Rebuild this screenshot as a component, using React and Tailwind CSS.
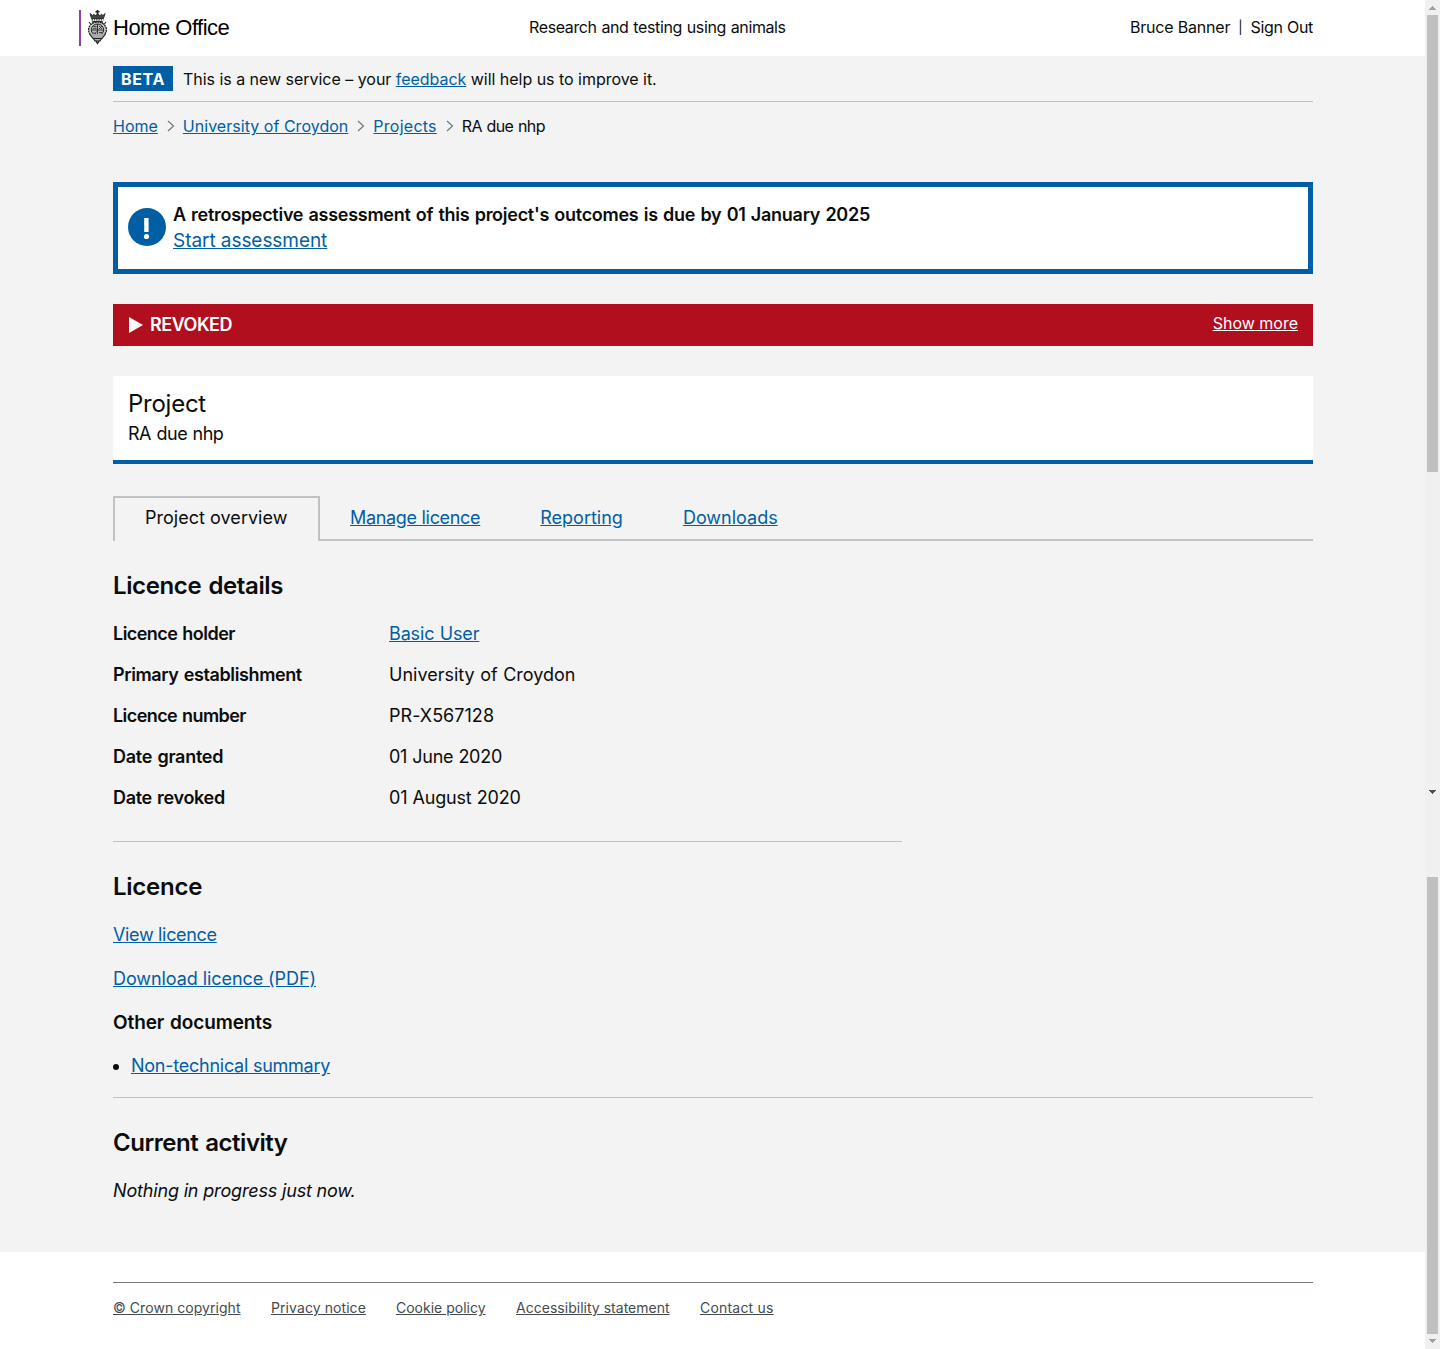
import React from "react";

const link = "text-[#005ea5] underline";

function Crest() {
  return (
    <svg width="20" height="36" viewBox="0 0 20 36" fill="none" stroke="#222" className="shrink-0">
      <path d="M9.500 0v5M7.500 1.800h4" strokeWidth="1.600" />
      <path d="M2 3.500l1.500 5h12L17 3.500l-2 2-1.500-1.300-1.500 1.600-2-1.800-3 1.800L6 4.200 4.500 5.500z" fill="#444" strokeWidth=".9" />
      <path d="M3.500 9.800h12" strokeWidth="1.200" strokeDasharray="1.500 .8" />
      <path d="M4.500 11.500h10v3h-10z" fill="#aaa" strokeWidth=".9" />
      <path d="M1 12l2.500 3M18 12l-2.500 3M7 11.500v3M9.500 11v3M12 11.500v3" strokeWidth="1.100" />
      <ellipse cx="9.500" cy="19.800" rx="8.900" ry="7.800" fill="#ccc" strokeWidth="1.300" strokeDasharray="2 .6" />
      <ellipse cx="9.500" cy="19.800" rx="6.200" ry="5.800" fill="#bbb" strokeWidth="1" />
      <path d="M9.500 14v12M3.500 20h12" strokeWidth=".9" />
      <path d="M5.500 16.500h3M5 18.300h3.500M11 16l3 3M14 16l-3 3M5.500 22.500l3 2M8.500 21.500l-2 3M11 22.500h3M11 24.300h2" strokeWidth=".8" />
      <path d="M1.500 24l3.500 4.500h9l3.500-4.500M5 28l2 3h5l2-3M7.500 30.500l2 3.200 2-3.200" fill="#aaa" strokeWidth="1.200" />
    </svg>
  );
}

function Arrow({ up, color }) {
  return (
    <svg width="7" height="4" viewBox="0 0 7 4" fill={color} shapeRendering="crispEdges">
      {up ? <path d="M3 0h1v1h1v1h1v1h1v1H0V3h1V2h1V1h1z" /> : <path d="M0 0h7v1H6v1H5v1H4v1H3V3H2V2H1V1H0z" />}
    </svg>
  );
}

function Scrollbar() {
  return (
    <div className="flex w-[15px] shrink-0 flex-col items-center bg-[#f0f0f0]">
      <div className="flex h-[15px] items-center pt-px"><Arrow up color="#a0a0a0" /></div>
      <div className="h-[457px] w-[11px] bg-[#c0c0c0]" />
      <div className="mt-[318px] h-1"><Arrow color="#505050" /></div>
      <div className="mt-[83px] h-[457px] w-[11px] bg-[#c0c0c0]" />
      <div className="flex h-[15px] items-start pt-[5px]"><Arrow color="#a0a0a0" /></div>
    </div>
  );
}

function Chevron() {
  return (
    <svg width="8" height="12" viewBox="0 0 8 12" fill="none" stroke="#6f777b" strokeWidth="1.200" className="ml-[9px] mr-2 shrink-0">
      <path d="M1 1l5.500 5L1 11" />
    </svg>
  );
}

const details = [
  ["Licence holder", "Basic User", "tracking-[-0.54px]", "tracking-[-0.13px]"],
  ["Primary establishment", "University of Croydon", "tracking-[-0.38px]", "tracking-[0.01px]"],
  ["Licence number", "PR-X567128", "tracking-[-0.58px]", "tracking-[0.03px]"],
  ["Date granted", "01 June 2020", "tracking-[-0.26px]", "tracking-[-0.28px]"],
  ["Date revoked", "01 August 2020", "tracking-[-0.32px]", "tracking-[-0.2px]"],
];

const footer = [
  ["© Crown copyright", "w-[128px] tracking-[0.05px]"],
  ["Privacy notice", "w-[95px] tracking-[0.08px]"],
  ["Cookie policy", "w-[90px]"],
  ["Accessibility statement", "w-[154px] tracking-[0.02px]"],
  ["Contact us", "w-[74px] tracking-[0.2px]"],
];

export default function App() {
  return (
    <div className="flex h-[1349px] w-[1440px] overflow-hidden bg-white font-['Inter',sans-serif] text-[#0b0c0c]">
      <div className="w-[1425px] shrink-0">
        <header className="flex h-14 items-start pl-[79px] pr-28 text-base leading-[20px]">
          <div className="mt-[10px] flex h-9 w-[450px] border-l-2 border-[#8f3fa8] pl-[7px]">
            <Crest />
            <span className="ml-[5px] mt-[3px] whitespace-nowrap font-['Liberation_Sans',sans-serif] text-[22px] leading-[30px] tracking-[-0.5px] text-black">Home Office</span>
          </div>
          <span className="mt-[17px] tracking-[-0.38px] [word-spacing:0.7px]">Research and testing using animals</span>
          <div className="ml-auto mt-[17px] flex">
            <span className="tracking-[-0.2px]">Bruce Banner</span>
            <span className="mx-2 text-[13px]">|</span>
            <span className="tracking-[-0.3px]">Sign Out</span>
          </div>
        </header>

        <main className="h-[1196px] bg-[#f3f3f3] px-[113px] pr-28">
          <div className="flex h-[46px] items-start border-b border-[#bfc1c3] pt-[10px]">
            <strong className="h-[25px] w-[60px] bg-[#005ea5] text-center text-base font-bold leading-[26px] tracking-[0.6px] text-white">BETA</strong>
            <span className="ml-[10px] text-base leading-[26px] tracking-[-0.03px]">This is a new service – your <a className={link}>feedback</a> will help us to improve it.</span>
          </div>

          <nav className="mt-[14px] flex h-5 items-center text-base leading-5">
            <a className={link}>Home</a><Chevron />
            <a className={"tracking-[0.03px] " + link}>University of Croydon</a><Chevron />
            <a className={"tracking-[0.25px] " + link}>Projects</a><Chevron />
            <span className="tracking-[-0.6px] [word-spacing:0.7px]">RA due nhp</span>
          </nav>

          <section className="mt-[46px] flex h-[92px] border-[5px] border-[#005ea5] bg-white pl-[10px] pt-[15px]">
            <svg width="38" height="38" viewBox="0 0 38 38" className="mt-[6px] shrink-0">
              <circle cx="19" cy="19" r="19" fill="#005ea5" />
              <path d="M16.200 10h4.400v14h-4.400z" fill="#fff" />
              <circle cx="18.500" cy="28.500" r="2.600" fill="#fff" />
            </svg>
            <div className="ml-[7px]">
              <p className="text-[18px] font-semibold leading-[26px] tracking-[-0.27px] [word-spacing:1px]">A retrospective assessment of this project's outcomes is due by 01 January 2025</p>
              <a className="block w-max text-[19px] leading-[26px] tracking-[-0.06px] text-[#005ea5] underline">Start assessment</a>
            </div>
          </section>

          <section className="mt-[30px] flex h-[42px] items-center bg-[#b10e1e] px-[15px] text-white">
            <svg width="16" height="16" viewBox="0 0 16 16" fill="#fff"><path d="M1 0l14 8-14 8z" /></svg>
            <strong className="ml-[6px] text-[18px] font-semibold leading-6 tracking-[-0.5px]">REVOKED</strong>
            <a className="-mt-1 ml-auto text-base leading-5 underline">Show more</a>
          </section>

          <section className="mt-[30px] h-[88px] border-b-4 border-[#005ea5] bg-white px-[15px] pt-[13px]">
            <h1 className="text-[24px] leading-[30px] tracking-[-0.25px]">Project</h1>
            <p className="text-[18px] leading-[30px] tracking-[-0.48px] [word-spacing:0.8px]">RA due nhp</p>
          </section>

          <nav className="mt-8 flex h-[45px] text-[18px] leading-[43px]">
            <span className="w-[207px] border-2 border-b-0 border-[#bfc1c3] pl-[30px] leading-[40px] tracking-[0.03px]">Project overview</span>
            <div className="flex grow gap-[60px] border-b-2 border-[#bfc1c3] pl-[30px]">
              <a className={"tracking-[-0.31px] " + link}>Manage licence</a><a className={link}>Reporting</a><a className={link}>Downloads</a>
            </div>
          </nav>

          <h2 className="mt-[30px] text-[24px] font-semibold leading-[30px] tracking-[-0.38px] [word-spacing:1.5px]">Licence details</h2>
          <dl className="mt-[12px] grid w-[789px] grid-cols-[276px_1fr] border-b border-[#bfc1c3] pb-[23px] text-[18px] leading-[41px]">
            {details.map(([k, v, kt, vt], i) => (
              <React.Fragment key={k}>
                <dt className={"font-semibold [word-spacing:1px] " + kt}>{k}</dt>
                <dd className={"[word-spacing:0.4px] " + vt}>{i === 0 ? <a className={link}>{v}</a> : v}</dd>
              </React.Fragment>
            ))}
          </dl>

          <h2 className="mt-[30px] text-[24px] font-semibold leading-[30px] tracking-[-0.25px]">Licence</h2>
          <div className="mt-[11px] text-[18px] leading-[44px]">
            <a className={"block w-max tracking-[-0.33px] " + link}>View licence</a>
            <a className={"block w-max tracking-[-0.07px] " + link}>Download licence (PDF)</a>
          </div>
          <h3 className="text-[19px] font-semibold leading-[44px] tracking-[-0.1px] [word-spacing:1px]">Other documents</h3>
          <ul className="flex h-[53px] items-start border-b border-[#bfc1c3] text-[18px] leading-[41px]">
            <li className="flex items-center gap-3"><span className="mt-[2px] size-[6px] rounded-full bg-[#0b0c0c]" /><a className={"tracking-[-0.25px] " + link}>Non-technical summary</a></li>
          </ul>
          <h2 className="mt-[30px] text-[24px] font-semibold leading-[30px] tracking-[-0.47px] [word-spacing:1.5px]">Current activity</h2>
          <p className="mt-[18px] text-[18px] italic leading-[30px] tracking-[-0.17px]">Nothing in progress just now.</p>
        </main>

        <footer className="ml-[113px] mr-28 mt-[30px] flex gap-[30px] border-t border-[#6f777b] pt-[15px] text-[14px] leading-5 text-[#454a4d]">
          {footer.map(([t, c]) => <a key={t} className={"whitespace-nowrap underline " + c}>{t}</a>)}
        </footer>
      </div>
      <Scrollbar />
    </div>
  );
}
